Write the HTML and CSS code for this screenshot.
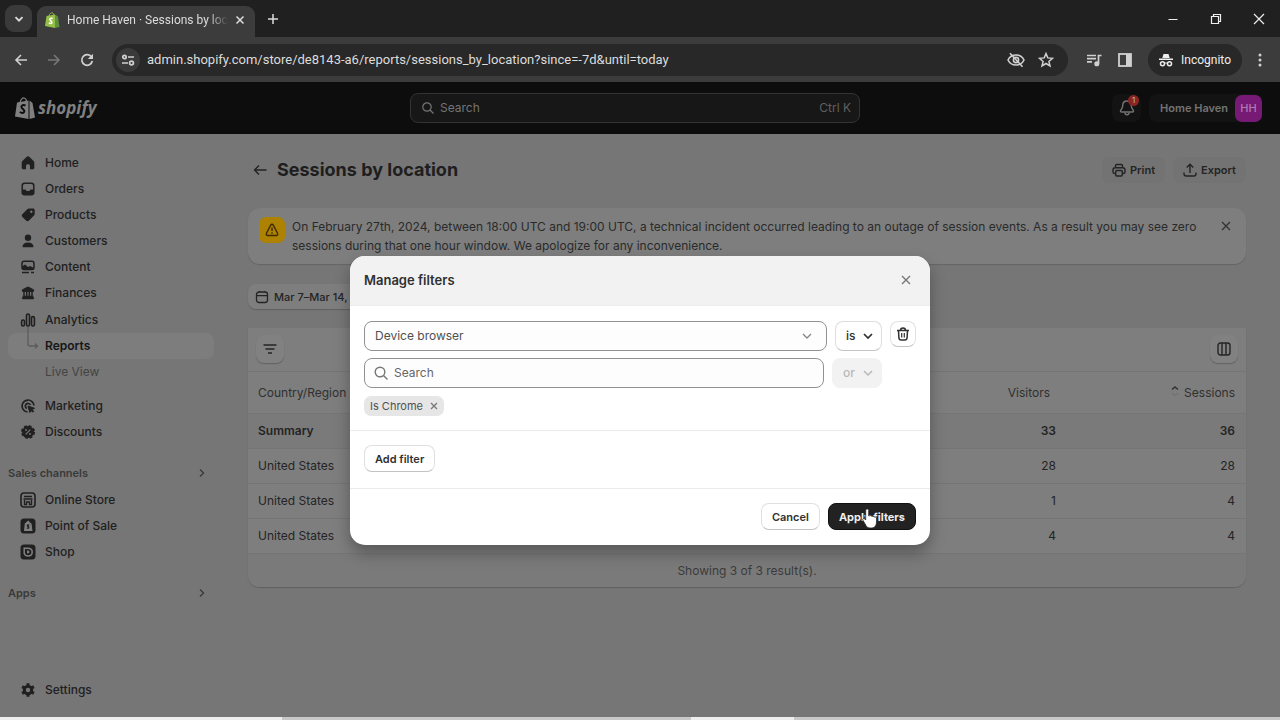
FILE: index.html
```html
<!DOCTYPE html>
<html lang="en">
<head>
<meta charset="utf-8">
<title>Home Haven · Sessions by location</title>
<link rel="stylesheet" href="styles.css">
</head>
<body>
<div class="window">
  <div class="tabstrip">
    <button class="tab-search" aria-label="Search tabs"><svg width="12" height="12" viewBox="0 0 12 12"><path d="M2.5 4.2 6 7.7l3.500-3.500" fill="none" stroke="currentColor" stroke-width="1.800"/></svg></button>
    <div class="tab">
      <svg class="favicon" width="15" height="16" viewBox="0 0 15 16"><path d="M1.500 4 10 2.500V16L0 14Z" fill="#95bf47"/><path d="M10 2.500 13 4.500 14.500 15 10 16Z" fill="#5e8e3e"/><path d="M4 4C4.500 1.500 6 .7 7.500 1c1 .3 1.500 1.500 1.500 3" fill="none" stroke="#95bf47"/><path d="M7.700 6.500C5.500 5.500 4.200 7 5.300 8.300s2 1.500 1.500 2.500-2 .7-3 .1" fill="none" stroke="#fff" stroke-width="1.500"/></svg>
      <span class="tab-title">Home Haven · Sessions by location</span>
      <button class="bare" aria-label="Close tab"><svg width="10" height="10" viewBox="0 0 10 10"><path d="m1.500 1.500 7 7m0-7-7 7" stroke="currentColor" stroke-width="1.500"/></svg></button>
    </div>
    <button class="bare new-tab" aria-label="New tab"><svg width="12" height="12" viewBox="0 0 12 12"><path d="M6 1v10M1 6h10" stroke="currentColor" stroke-width="1.500"/></svg></button>
    <div class="window-controls">
      <button class="bare" aria-label="Minimize"><svg width="12" height="12" viewBox="0 0 12 12"><path d="M1.500 6.500h9" stroke="currentColor"/></svg></button>
      <button class="bare" aria-label="Restore"><svg width="12" height="12" viewBox="0 0 12 12"><path d="M1.500 3.500h7v7h-7ZM3.500 3.500v-2h7v7h-2" fill="none" stroke="currentColor" stroke-width="1.200"/></svg></button>
      <button class="bare" aria-label="Close"><svg width="12" height="12" viewBox="0 0 12 12"><path d="m1 1 10 10m0-10L1 11" stroke="currentColor" stroke-width="1.200"/></svg></button>
    </div>
  </div>

  <div class="toolbar">
    <button class="bare" aria-label="Back"><svg width="14" height="14" viewBox="0 0 14 14"><path d="M13 7H2m5-5L2 7l5 5" fill="none" stroke="currentColor" stroke-width="1.600"/></svg></button>
    <button class="bare dim" aria-label="Forward"><svg width="14" height="14" viewBox="0 0 14 14"><path d="M1 7h11M7 2l5 5-5 5" fill="none" stroke="currentColor" stroke-width="1.600"/></svg></button>
    <button class="bare" aria-label="Reload"><svg width="14" height="14" viewBox="0 0 14 14"><path d="M11.500 4A5.300 5.300 0 1 0 12.300 8" fill="none" stroke="currentColor" stroke-width="1.700"/><path d="M13 .8V6H7.800Z" fill="currentColor"/></svg></button>
    <div class="omnibox">
      <button class="site-info" aria-label="Site information"><svg width="14" height="14" viewBox="0 0 14 14" fill="none" stroke="currentColor" stroke-width="1.700"><circle cx="3.500" cy="4" r="1.700"/><path d="M7 4h6M1 10h6"/><circle cx="10.500" cy="10" r="1.900"/></svg></button>
      <input class="url" aria-label="Address" value="admin.shopify.com/store/de8143-a6/reports/sessions_by_location?since=-7d&amp;until=today">
      <button class="bare" aria-label="Third-party cookies blocked"><svg width="18" height="16" viewBox="0 0 18 16" fill="none" stroke="currentColor" stroke-width="1.600"><path d="M1 8c3.200-6.700 12.800-6.700 16 0-3.200 6.700-12.800 6.700-16 0Z"/><circle cx="9" cy="8" r="2.600"/><path d="m3 1.200 12.500 13.500"/></svg></button>
      <button class="bare" aria-label="Bookmark"><svg width="16" height="16" viewBox="0 0 16 16"><path d="m8 1.600 1.800 4.300 4.700.4-3.600 3.100 1.100 4.600L8 11.500 4 14l1.100-4.600L1.500 6.300l4.700-.4Z" fill="none" stroke="currentColor" stroke-width="1.500"/></svg></button>
    </div>
    <div class="toolbar-end">
      <button class="bare" aria-label="Media controls"><svg width="16" height="14" viewBox="0 0 16 14" fill="none" stroke="currentColor" stroke-width="1.700"><path d="M1 2.500h9M1 5.700h9M1 8.900h5M12.500 10.500V2.500h3"/><circle cx="10.800" cy="10.700" r="1.700" fill="currentColor"/></svg></button>
      <button class="bare" aria-label="Side panel"><svg width="14" height="14" viewBox="0 0 14 14"><rect x="1" y="1" width="12" height="12" fill="none" stroke="currentColor" stroke-width="1.800"/><path d="M8 1h5v12H8Z" fill="currentColor"/></svg></button>
      <button class="incognito"><svg width="14" height="14" viewBox="0 0 14 14"><path d="M4.500 1h5l1.200 4H3.300ZM0 5.500h14V7H0Z" fill="currentColor"/><path d="M5.500 10.500c1-.7 2-.7 3 0" fill="none" stroke="currentColor"/><g fill="none" stroke="currentColor" stroke-width="1.500"><circle cx="3.500" cy="10.700" r="2"/><circle cx="10.500" cy="10.700" r="2"/></g></svg>Incognito</button>
      <button class="bare" aria-label="Menu"><svg width="4" height="14" viewBox="0 0 4 14" fill="currentColor"><circle cx="2" cy="2" r="1.500"/><circle cx="2" cy="7" r="1.500"/><circle cx="2" cy="12" r="1.500"/></svg></button>
    </div>
  </div>

  <div class="page">
    <header class="topbar">
      <a class="logo" href="#"><svg width="20" height="22" viewBox="0 0 20 22"><path d="M2 5.500 13.500 3.500V22L0 19.500Z" fill="currentColor"/><path d="M14.500 3.500 17.500 6 20 20.500 14.500 22Z" fill="currentColor"/><path d="M5 6C5.500 2.500 7.500.7 9.200 1c1.600.3 2.300 2 2.300 4" fill="none" stroke="currentColor" stroke-width="1.200"/><path d="M10.500 8.500C7.500 7.200 5.700 9 6.700 10.700s3 2 2.600 3.800-2.500 1.800-4.500.5" fill="none" stroke="#0d0d0d" stroke-width="2"/></svg><span>shopify</span></a>
      <label class="search"><svg width="12" height="12" viewBox="0 0 12 12" fill="none" stroke="currentColor" stroke-width="1.200"><circle cx="5" cy="5" r="4.200"/><path d="m8 8 3.500 3.500"/></svg><input type="search" aria-label="Search" placeholder="Search"><kbd>Ctrl K</kbd></label>
      <div class="account-bar">
        <button class="bell" aria-label="Notifications, 1 new"><svg width="16" height="18" viewBox="0 0 16 18" fill="none" stroke="currentColor" stroke-width="1.400"><path d="M8 2C5 2 3.700 4.200 3.700 6.700c0 2.300-1 3.300-2 4.600-.5.800-.1 1.700.9 1.700h10.800c1 0 1.400-.9.900-1.700-1-1.300-2-2.300-2-4.600C12.300 4.200 11 2 8 2Z"/><path d="M5.800 13.500c.3 3 4.100 3 4.400 0"/></svg><span class="badge">1</span></button>
        <button class="store"><span>Home Haven</span><span class="avatar">HH</span></button>
      </div>
    </header>

    <div class="shell">
      <nav class="sidebar" aria-label="Main">
        <a class="nav" href="#"><svg viewBox="0 0 16 16" fill="currentColor"><path d="M8 1.300c.5 0 1 .2 1.300.5L13.600 6c.5.500.7 1 .7 1.700v5.100c0 .9-.6 1.500-1.500 1.500H10v-3.100c0-2.500-4-2.500-4 0v3.100H3.200c-.9 0-1.500-.6-1.500-1.500V7.700c0-.7.2-1.200.7-1.700l4.300-4.200c.3-.3.800-.5 1.300-.5Z"/></svg>Home</a>
        <a class="nav" href="#"><svg viewBox="0 0 16 16"><rect x="2.200" y="2.200" width="11.600" height="11.600" rx="2.500" fill="none" stroke="currentColor" stroke-width="1.500"/><path d="M2 8.500h3.500c.5 2 4.500 2 5 0H14V12l-2 2H4l-2-2Z" fill="currentColor"/></svg>Orders</a>
        <a class="nav" href="#"><svg viewBox="0 0 16 16"><path d="M9 1.500h4c1 0 1.700.7 1.700 1.700v3.500c0 .7-.2 1.200-.7 1.700l-5 5c-1 1-2 1-3 0L2.500 10c-1-1-1-2 0-3L7.300 2.200C7.800 1.700 8.300 1.500 9 1.500ZM11.300 6a1.200 1.200 0 1 0 0-2.400 1.200 1.200 0 0 0 0 2.400Z" fill="currentColor" fill-rule="evenodd"/></svg>Products</a>
        <a class="nav" href="#"><svg viewBox="0 0 16 16" fill="currentColor"><circle cx="8" cy="4.700" r="3.200"/><path d="M2.500 13.500C2.700 11 5 9.500 8 9.500s5.300 1.500 5.500 4c0 .5-.3.800-.8.800H3.300c-.5 0-.8-.3-.8-.8Z"/></svg>Customers</a>
        <a class="nav" href="#"><svg viewBox="0 0 16 16"><rect x="2" y="2.200" width="12" height="8.300" rx="2.200" fill="none" stroke="currentColor" stroke-width="1.500"/><path d="m2 7.500 3-2 3 2.500 2-1 4 2v1.500H2Z" fill="currentColor"/><path d="M2 13.500h7m2 0h3" stroke="currentColor" stroke-width="1.500"/></svg>Content</a>
        <a class="nav" href="#"><svg viewBox="0 0 16 16"><path d="M7.300 1.800c.5-.2.900-.2 1.400 0l4.800 2.500c1 .6 1 2.400-.5 2.700H3c-1.500-.3-1.500-2.100-.5-2.700Z" fill="currentColor"/><path d="M4 6.500v5m2.700-5v5m2.600-5v5m2.700-5v5" stroke="currentColor" stroke-width="1.500"/><path d="M3 10.800h10l1 2.200c.2.700-.2 1.200-.8 1.200H2.800c-.6 0-1-.5-.8-1.200Z" fill="currentColor"/></svg>Finances</a>
        <div class="nav-group">
          <a class="nav" href="#"><svg viewBox="0 0 16 16" fill="none" stroke="currentColor" stroke-width="1.600"><rect x="1.600" y="8" width="2.900" height="6" rx="1.400"/><rect x="6.500" y="2" width="3" height="12" rx="1.500"/><rect x="11.500" y="4.600" width="2.900" height="9.400" rx="1.400"/></svg>Analytics</a>
          <a class="nav current" href="#"><svg class="branch" width="12" height="24" viewBox="0 0 12 24" fill="none" stroke="currentColor" stroke-width="1.300"><path d="M1 0v17c0 1.500.7 2 2 2h7M8 16.500l2.500 2.500L8 21.500"/></svg>Reports</a>
          <a class="nav sub" href="#">Live View</a>
        </div>
        <a class="nav spaced" href="#"><svg viewBox="0 0 16 16" fill="none" stroke="currentColor" stroke-width="1.700"><path d="M14 7.500A6 6 0 1 0 7.500 14M10.500 7a2.700 2.700 0 1 0-3.800 3.500"/><path d="m8 8 6.500 2.300-2.500 1.200 1.700 1.700-1 1-1.700-1.700-1.200 2Z" fill="currentColor" stroke-width="1"/></svg>Marketing</a>
        <a class="nav" href="#"><svg viewBox="0 0 16 16"><circle cx="8" cy="8" r="5.900" fill="currentColor"/><circle cx="8" cy="8" r="6" fill="none" stroke="currentColor" stroke-width="2" stroke-dasharray="2.800 1.910"/><path d="m5.700 10.300 4.600-4.600" stroke="#767676" stroke-width="1.200"/><circle cx="6" cy="6" r=".9" fill="#767676"/><circle cx="10" cy="10" r=".9" fill="#767676"/></svg>Discounts</a>
        <a class="nav-heading" href="#">Sales channels<svg width="8" height="10" viewBox="0 0 8 10"><path d="m2 1.500 3.500 3.500L2 8.500" fill="none" stroke="currentColor" stroke-width="1.300"/></svg></a>
        <a class="nav" href="#"><svg viewBox="0 0 16 16"><rect x="1" y="1" width="14" height="14" rx="3" fill="none" stroke="currentColor" stroke-width="1.600"/><path d="M4 4.500h8M3.500 7h9M4.500 8v4.500h2V10h3v2.500h2V8" fill="none" stroke="currentColor" stroke-width="1.300"/></svg>Online Store</a>
        <a class="nav" href="#"><svg viewBox="0 0 16 16"><rect x=".5" y=".5" width="15" height="15" rx="3.500" fill="currentColor"/><path d="m4 13 .8-7.500 2-1.800c1-1.700 2.700-1.200 2.700.5L11.500 5.500l1 7.500Z" fill="#808080"/><path d="M9.300 7.200c-2-.7-2.600.8-1.300 1.300s1 2.200-1.200 1.500" fill="none" stroke="currentColor" stroke-width="1.300"/></svg>Point of Sale</a>
        <a class="nav" href="#"><svg viewBox="0 0 16 16"><rect x=".5" y=".5" width="15" height="15" rx="3.500" fill="currentColor"/><path d="M4.200 4.200h3.600c2.700 0 4.400 1.500 4.400 3.800S10.500 12 8 12 4.500 10.800 4.200 9.200V4.200Z" fill="none" stroke="#808080" stroke-width="1.500"/><path d="M7 6.500c2 0 2.500.7 2.500 1.600S8.500 9.500 7 9.500Z" fill="#808080"/></svg>Shop</a>
        <a class="nav-heading" href="#">Apps<svg width="8" height="10" viewBox="0 0 8 10"><path d="m2 1.500 3.500 3.500L2 8.500" fill="none" stroke="currentColor" stroke-width="1.300"/></svg></a>
        <a class="nav settings" href="#"><svg viewBox="0 0 16 16"><circle cx="8" cy="8" r="3.700" fill="none" stroke="currentColor" stroke-width="3"/><path d="M8 1.200v3M8 11.800v3M2.100 4.600l2.600 1.500M11.300 9.900l2.600 1.500M2.100 11.400l2.600-1.500M11.300 6.100l2.600-1.500" stroke="currentColor" stroke-width="3"/></svg>Settings</a>
      </nav>

      <main class="content">
        <div class="title-row">
          <button class="bare" aria-label="Go back"><svg width="14" height="12" viewBox="0 0 14 12"><path d="M13.500 6h-12M6 1.500 1.500 6 6 10.500" fill="none" stroke="currentColor" stroke-width="1.400"/></svg></button>
          <h1>Sessions by location</h1>
          <div class="actions">
            <button class="action"><svg width="14" height="14" viewBox="0 0 14 14" fill="none" stroke="currentColor" stroke-width="1.400"><path d="M3.500 4.500V2.800c0-.9.500-1.300 1.300-1.300h4.400c.8 0 1.300.4 1.300 1.300v1.700M3 10.500c-1.500 0-2-.7-2-2V7c0-1.500.7-2.300 2.200-2.300h7.600C12.300 4.700 13 5.500 13 7v1.500c0 1.300-.5 2-2 2"/><rect x="3.700" y="7.500" width="6.600" height="5.500" rx="1"/></svg>Print</button>
            <button class="action"><svg width="14" height="14" viewBox="0 0 14 14" fill="none" stroke="currentColor" stroke-width="1.400"><path d="M7 10V1.500M3.700 4.500 7 1.300l3.300 3.200M1 9.500v1.200C1 12 1.700 13 3.200 13h7.600c1.500 0 2.200-1 2.200-2.300V9.500"/></svg>Export</button>
          </div>
        </div>

        <section class="banner">
          <span class="warn"><svg width="14" height="14" viewBox="0 0 14 14" fill="none" stroke="currentColor" stroke-width="1.400"><path d="M7 1.300c.6 0 1 .3 1.300.8l4.200 8.200c.6 1.200 0 2.200-1.300 2.200H2.800c-1.300 0-1.900-1-1.300-2.200l4.200-8.200c.3-.5.700-.8 1.300-.8ZM7 4.500V8M7 9.300v1.400"/></svg></span>
          <p>On February 27th, 2024, between 18:00 UTC and 19:00 UTC, a technical incident occurred leading to an outage of session events. As a result you may see zero sessions during that one hour window. We apologize for any inconvenience.</p>
          <button class="bare" aria-label="Dismiss"><svg width="10" height="10" viewBox="0 0 10 10"><path d="m1 1 8 8m0-8L1 9" stroke="currentColor" stroke-width="1.300"/></svg></button>
        </section>

        <button class="date"><svg width="14" height="14" viewBox="0 0 14 14" fill="none" stroke="currentColor" stroke-width="1.300"><rect x="1.500" y="2" width="11" height="10.500" rx="2.500"/><path d="M1.500 5.700h11M4.500 1v1M9.500 1v1"/></svg>Mar 7–Mar 14, 2024</button>

        <section class="report">
          <div class="report-tools">
            <button class="tool" aria-label="Filters"><svg width="14" height="12" viewBox="0 0 14 12"><path d="M.5 2h13M2.500 6h9M5 10h4" stroke="currentColor" stroke-width="1.500"/></svg></button>
            <button class="tool" aria-label="Edit columns"><svg width="14" height="14" viewBox="0 0 14 14" fill="none" stroke="currentColor" stroke-width="1.400"><rect x="1" y="1" width="12" height="12" rx="2.500"/><path d="M5 1v12M9 1v12"/></svg></button>
          </div>
          <table>
            <thead><tr><th scope="col">Country/Region</th><th scope="col" class="visitors">Visitors</th><th scope="col"><svg class="sort" width="10" height="12" viewBox="0 0 10 12" fill="none"><path d="M2 4.500 5 2l3 2.500" stroke="#303030" stroke-width="1.400"/><path d="M2 8 5 10.500 8 8" stroke="#737373" stroke-width="1.300"/></svg>Sessions</th></tr></thead>
            <tbody>
              <tr class="summary"><td>Summary</td><td>33</td><td>36</td></tr>
              <tr><td>United States</td><td>28</td><td>28</td></tr>
              <tr><td>United States</td><td>1</td><td>4</td></tr>
              <tr><td>United States</td><td>4</td><td>4</td></tr>
            </tbody>
          </table>
          <p class="result">Showing 3 of 3 result(s).</p>
        </section>
      </main>
    </div>

    <div class="modal-layer">
      <section class="modal" role="dialog" aria-labelledby="modal-title">
        <header class="modal-head"><h2 id="modal-title">Manage filters</h2><button class="bare" aria-label="Close dialog"><svg width="10" height="10" viewBox="0 0 10 10"><path d="m1 1 8 8m0-8L1 9" stroke="currentColor" stroke-width="1.400"/></svg></button></header>
        <div class="filters">
          <div class="filter-row">
            <div class="pick wide"><select aria-label="Filter field"><option>Device browser</option></select><svg width="10" height="8" viewBox="0 0 10 8"><path d="m1 2 4 4 4-4" fill="none" stroke="currentColor" stroke-width="1.400"/></svg></div>
            <div class="pick small"><select aria-label="Condition"><option>is</option></select><svg width="10" height="8" viewBox="0 0 10 8"><path d="m1 2 4 4 4-4" fill="none" stroke="currentColor" stroke-width="1.700"/></svg></div>
            <button class="remove" aria-label="Remove filter"><svg width="14" height="14" viewBox="0 0 14 14" fill="none" stroke="currentColor" stroke-width="1.500"><path d="M1 3.500h12M4.500 3.300C4.500.3 9.500.3 9.500 3.300M2.500 3.500l.4 7.200c.1 1.600.8 2.300 2.300 2.300h3.600c1.500 0 2.200-.7 2.300-2.300l.4-7.200"/><path d="M5.700 6v4.500M8.300 6v4.500" stroke-width="1.200"/></svg></button>
          </div>
          <div class="filter-row value-row">
            <label class="value-search"><svg width="14" height="14" viewBox="0 0 14 14" fill="none" stroke="currentColor" stroke-width="1.400"><circle cx="6" cy="6" r="4.800"/><path d="m9.500 9.500 4 4"/></svg><input type="search" aria-label="Search values" placeholder="Search"></label>
            <div class="pick small off"><select aria-label="Operator" disabled><option>or</option></select><svg width="10" height="8" viewBox="0 0 10 8"><path d="m1 2 4 4 4-4" fill="none" stroke="currentColor" stroke-width="1.500"/></svg></div>
          </div>
          <span class="tag">Is Chrome<button class="bare" aria-label="Remove Is Chrome"><svg width="8" height="8" viewBox="0 0 8 8"><path d="m1 1 6 6m0-6L1 7" stroke="currentColor" stroke-width="1.300"/></svg></button></span>
        </div>
        <div class="add"><button class="button">Add filter</button></div>
        <footer class="modal-foot"><button class="button">Cancel</button><button class="button primary">Apply filters<svg class="pointer" width="16" height="21" viewBox="0 0 16 21"><path d="M5.200 1c1 0 1.500.7 1.500 1.500V8l.5.100c.3-.8 2.300-.8 2.600.3.800-.5 2.200-.2 2.400.7.900-.4 2.300.1 2.300 1.400v3.300c0 3.700-1.700 6.200-5 6.200H8c-2 0-3.300-1-4.200-2.700L.8 12c-.5-1.200 1-2.100 1.900-1.200l1 1.200V2.500C3.700 1.700 4.200 1 5.200 1Z" fill="#fff" stroke="#222" stroke-width=".8"/></svg></button></footer>
      </section>
    </div>
  </div>
  <div class="edge"></div>
</div>
</body>
</html>
```
FILE: styles.css
```css
* { box-sizing: border-box; }
body { margin: 0; font: 12px/20px Inter, "Liberation Sans", sans-serif; color: #242424; background: #767676; }
button, input, select { font: inherit; color: inherit; margin: 0; }
button { cursor: pointer; }
a { color: inherit; text-decoration: none; }
h1, h2, p { margin: 0; }
svg { display: block; flex: none; }
.window { min-height: 100vh; display: flex; flex-direction: column; }
.bare { display: flex; align-items: center; justify-content: center; padding: 0; border: 0; background: none; }

.tabstrip { height: 37px; display: flex; align-items: flex-end; background: #202020; color: #dcdcdc; padding-left: 5px; font-family: Roboto, "Noto Sans", sans-serif; font-size: 12px; }
.tab-search { width: 27px; height: 27px; margin-bottom: 5px; border: 0; border-radius: 9px; background: #3a3a3a; display: flex; align-items: center; justify-content: center; padding: 0; }
.tab { width: 218px; height: 31px; margin-left: 5px; padding: 0 10px 4px 8px; display: flex; align-items: center; gap: 7px; background: #3c3c3c; border-radius: 9px 9px 0 0; }
.tab-title { flex: 1; overflow: hidden; white-space: nowrap; mask-image: linear-gradient(to right, #000 88%, transparent); }
.new-tab { width: 36px; height: 37px; }
.window-controls { margin-left: auto; height: 37px; display: flex; color: #eee; }
.window-controls .bare { width: 43px; }

.toolbar { height: 45px; display: flex; align-items: center; background: #3c3c3c; color: #d0d0d0; padding: 0 18px 0 13px; gap: 18px; font-family: Roboto, "Noto Sans", sans-serif; }
.toolbar .bare.dim { color: #777; }
.toolbar > .bare { width: 15px; }
.omnibox { flex: 1; height: 32px; display: flex; align-items: center; gap: 13px; background: #282828; border-radius: 16px; padding: 0 14px 0 4px; }
.site-info { width: 24px; height: 24px; padding: 0; border: 0; border-radius: 12px; background: #3a3a3a; display: flex; align-items: center; justify-content: center; }
.url { flex: 1; min-width: 0; margin-left: -6px; border: 0; padding: 0; background: none; color: #dcdcdc; font-size: 13px; }
.toolbar-end { display: flex; align-items: center; gap: 16px; }
.incognito { height: 32px; padding: 0 11px; display: flex; align-items: center; gap: 8px; border: 0; border-radius: 16px; background: #282828; font-size: 12px; color: #eee; }

.page { flex: 1; position: relative; display: flex; flex-direction: column; background: #767676; }
.topbar { height: 52px; background: #0d0d0d; display: grid; grid-template-columns: 395px minmax(0, 450px) 1fr; align-items: center; padding: 0 18px 0 15px; color: #747474; }
.logo { display: flex; align-items: center; gap: 3px; font: italic 700 17px/24px "Open Sans", sans-serif; color: #808080; }
.search { height: 30px; display: flex; align-items: center; gap: 6px; padding: 0 8px 0 11px; border: 1px solid #333; border-radius: 8px; background: #171717; }
.search input { flex: 1; min-width: 0; border: 0; padding: 0; background: none; outline: 0; }
.search input::placeholder { color: #747474; }
.search kbd { font: inherit; color: #606060; }
.account-bar { display: flex; justify-content: flex-end; gap: 8px; }
.bell { position: relative; width: 29px; height: 28px; padding: 0; border: 0; border-radius: 8px; background: #131313; display: flex; align-items: center; justify-content: center; }
.badge { position: absolute; top: 1px; right: 2px; width: 11px; height: 11px; border-radius: 6px; background: #8d2424; color: #bbb; font-size: 8px; line-height: 11px; }
.store { height: 28px; padding: 0 0 0 11px; display: flex; align-items: center; gap: 7px; border: 0; border-radius: 8px; background: #131313; font-weight: 600; font-size: 11px; }
.avatar { width: 27px; height: 27px; border-radius: 7px; background: #761a76; color: #b07ab0; font-weight: 500; line-height: 27px; }

.shell { flex: 1; display: flex; }
.sidebar { width: 240px; padding: 16px 26px 14px 8px; display: flex; flex-direction: column; font-weight: 500; }
.nav { position: relative; height: 26px; display: flex; align-items: center; gap: 9px; padding-left: 12px; border-radius: 8px; color: #202020; }
.nav > svg { width: 16px; height: 16px; }
.nav-group { margin-top: 1px; }
.nav.current { padding-left: 37px; background: #7d7d7d; color: #161616; font-weight: 600; }
.nav > .branch { position: absolute; left: 19px; top: -6px; width: 12px; height: 24px; color: #5c5c5c; }
.nav.sub { padding-left: 37px; color: #444; font-weight: 400; }
.nav.spaced { margin-top: 8px; }
.nav-heading { height: 24px; margin: 16px 0 2px; display: flex; align-items: center; justify-content: space-between; padding-right: 8px; font-size: 11px; font-weight: 600; color: #3a3a3a; }
.nav.settings { margin-top: auto; }

.content { flex: 1; min-width: 0; padding: 22px 34px 0 8px; }
.title-row { display: flex; align-items: center; gap: 10px; padding-left: 5px; height: 28px; }
h1 { font-size: 18px; line-height: 24px; font-weight: 700; color: #1e1e1e; }
.actions { margin-left: auto; display: flex; gap: 8px; }
.action { height: 26px; padding: 0 10px; display: flex; align-items: center; gap: 4px; border: 0; border-radius: 8px; background: #737373; font-size: 11px; font-weight: 600; }
.banner { margin-top: 24px; padding: 9px 15px 9px 11px; display: flex; align-items: flex-start; gap: 7px; border-radius: 12px; background: #7e7e7e; box-shadow: 0 1px 1px #656565; color: #2a2a2a; }
.banner p { flex: 1; line-height: 19px; }
.banner .bare { height: 18px; color: #333; }
.warn { width: 26px; height: 26px; border-radius: 7px; background: #ac8200; color: #3f2a00; display: flex; align-items: center; justify-content: center; }
.date { margin-top: 20px; height: 25px; padding: 0 10px 0 7px; display: flex; align-items: center; gap: 5px; border: 0; border-radius: 8px; background: #7e7e7e; box-shadow: 0 1px 1px #606060; font-size: 11px; font-weight: 500; }
.report { margin-top: 19px; border-radius: 0 0 12px 12px; background: #7e7e7e; box-shadow: 0 1px 1px #606060; overflow: hidden; }
.report-tools { height: 44px; padding: 0 8px 2px; display: flex; align-items: center; justify-content: space-between; border-bottom: 1px solid #747474; }
.tool { width: 28px; height: 28px; padding: 0; display: flex; align-items: center; justify-content: center; border: 0; border-radius: 8px; background: #818181; box-shadow: 0 1px 1px #626262; }
table { width: 100%; border-collapse: collapse; table-layout: fixed; }
th, td { height: 35px; padding: 0 11px; text-align: right; border-bottom: 1px solid #757575; font-weight: 400; }
th { height: 41px; padding-top: 2px; color: #303030; }
th:first-child, td:first-child { width: 640px; padding-left: 10px; text-align: left; }
.visitors { padding-right: 17px; }
.sort { display: inline-block; margin-right: 4px; }
.summary td { font-weight: 600; background: #7a7a7a; }
.result { height: 33px; line-height: 34px; text-align: center; background: #7a7a7a; color: #3a3a3a; }

.modal-layer { position: absolute; inset: 0; padding-top: 2px; display: flex; align-items: center; justify-content: center; }
.modal { width: 580px; max-width: 94%; border-radius: 15px; background: #fff; box-shadow: 0 8px 16px rgba(0, 0, 0, .3); color: #303030; }
.modal-head { height: 50px; padding: 0 19px 2px 14px; display: flex; align-items: center; justify-content: space-between; background: #f2f2f2; border-bottom: 1px solid #ececec; border-radius: 15px 15px 0 0; }
.modal-head .bare { color: #777; }
h2 { font-size: 13px; line-height: 20px; font-weight: 600; }
.filters { padding: 15px 14px 14px; display: flex; flex-direction: column; align-items: stretch; border-bottom: 1px solid #ebebeb; }
.filter-row { display: flex; gap: 8px; align-items: flex-start; }
.value-row { margin: 7px 34px 8px 0; }
.pick { position: relative; }
.pick select { appearance: none; width: 100%; height: 30px; padding: 0 10px; border: 1px solid #dedede; border-bottom-color: #c4c4c4; border-radius: 8px; background: #fff; opacity: 1; }
.pick svg { position: absolute; right: 9px; top: 11px; pointer-events: none; }
.wide { flex: 1; }
.wide select { border-color: #919191; background: #fdfdfd; color: #505050; }
.wide svg { right: 15px; color: #888; }
.small { width: 47px; font-weight: 500; }
.off { width: 50px; color: #b8b8b8; }
.off select { border-color: #f2f2f2; background: #f2f2f2; }
.remove { width: 26px; height: 26px; padding: 0; display: flex; align-items: center; justify-content: center; border: 1px solid #e2e2e2; border-bottom-color: #c4c4c4; border-radius: 8px; background: #fff; }
.value-search { flex: 1; height: 30px; padding: 0 9px; display: flex; align-items: center; gap: 6px; border: 1px solid #919191; border-radius: 8px; background: #fdfdfd; color: #777; }
.value-search input { flex: 1; min-width: 0; border: 0; padding: 0; background: none; outline: 0; }
.value-search input::placeholder { color: #666; }
.tag { align-self: flex-start; height: 20px; padding: 0 6px; display: flex; align-items: center; gap: 7px; border-radius: 7px; background: #e6e6e6; font-size: 11px; color: #505050; }
.tag .bare { color: #777; }
.add { padding: 14px; height: 58px; border-bottom: 1px solid #ebebeb; }
.button { height: 27px; padding: 0 10px; border: 1px solid #e0e0e0; border-bottom-color: #c2c2c2; border-radius: 8px; background: #fff; font-size: 11px; font-weight: 600; }
.modal-foot { height: 56px; padding: 14px 14px 0; display: flex; align-items: flex-start; justify-content: flex-end; gap: 8px; }
.primary { position: relative; border-color: #111; background: #222; color: #eee; font-weight: 700; }
.pointer { position: absolute; left: 33px; top: 4px; }
.edge { height: 3px; background: linear-gradient(to right, #eee 22%, #c8c8c8 22%, #c8c8c8 54%, #eee 54%, #eee 62%, #c8c8c8 62%); }
```
